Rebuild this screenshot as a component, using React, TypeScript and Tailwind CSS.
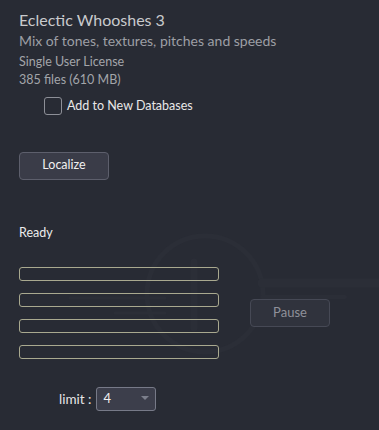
import React from "react";

function Watermark() {
  return (
    <svg
      className="pointer-events-none absolute left-0 top-0"
      width="379"
      height="430"
      viewBox="0 0 379 430"
      fill="none"
    >
      <g stroke="#2b2e37" strokeLinecap="round">
        <circle cx="205" cy="294" r="58" strokeWidth="5" />
        <path d="M262 283 H379" strokeWidth="9" />
        <path d="M262 297 H345" strokeWidth="4" />
        <path d="M194 262 V328" strokeWidth="7" />
        <path d="M70 298 H165" strokeWidth="3" />
        <path d="M115 313 H165" strokeWidth="3" />
      </g>
    </svg>
  );
}

export default function App() {
  const bars = [0, 1, 2, 3];
  return (
    <div
      className="relative h-[430px] w-[379px] overflow-hidden bg-[#282b34] text-[#e6e6e6]"
      style={{ fontFamily: 'Lato, "Noto Sans", sans-serif' }}
    >
      <Watermark />
      <div className="relative flex flex-col px-[19px] pt-[9px]">
        <h1 className="text-[16px] leading-[22px] text-[#c9cacd]">Eclectic Whooshes 3</h1>
        <p className="text-[14px] leading-[20px] text-[#9d9fa5]">Mix of tones, textures, pitches and speeds</p>
        <p className="mt-[2px] text-[12.5px] leading-[18px] text-[#a3a5aa]">Single User License</p>
        <p className="text-[12.5px] leading-[18px] text-[#a3a5aa]">385 files (610 MB)</p>

        <label className="ml-[25px] mt-[8px] flex items-center gap-[5px]">
          <span className="h-[18px] w-[18px] rounded-[3px] border border-[#8d8f97] bg-[#282b34]" />
          <span className="text-[12.5px] text-[#e8e8e8]">Add to New Databases</span>
        </label>

        <button className="mt-[36px] h-[28px] w-[90px] rounded-[4px] border border-[#5d5f6c] bg-[#3a3c48] text-[12.5px] text-[#f0f0f0]">
          Localize
        </button>

        <p className="mt-[44px] text-[12.5px] leading-[18px] text-[#ececec]">Ready</p>

        <div className="mt-[25px] flex items-center gap-[31px]">
          <div className="flex flex-col gap-[12px]">
            {bars.map((b) => (
              <div key={b} className="h-[14px] w-[200px] rounded-[3px] border border-[#a9a98f]" />
            ))}
          </div>
          <button className="h-[28px] w-[80px] rounded-[4px] border border-[#464955] bg-[#30333d] text-[13px] text-[#8f919a]">
            Pause
          </button>
        </div>

        <div className="ml-[40px] mt-[28px] flex items-center gap-[5px]">
          <span className="text-[13.5px] text-[#e6e6e6]">limit :</span>
          <div className="flex h-[24px] w-[60px] items-center justify-between rounded-[3px] border border-[#777a88] bg-[#3c3e4b] pl-[6px] pr-[6px]">
            <span className="text-[13px] text-[#f0f0f0]">4</span>
            <svg width="8" height="5" viewBox="0 0 8 5">
              <path d="M0 0 H8 L4 4 Z" fill="#7c7f8c" />
            </svg>
          </div>
        </div>
      </div>
    </div>
  );
}
